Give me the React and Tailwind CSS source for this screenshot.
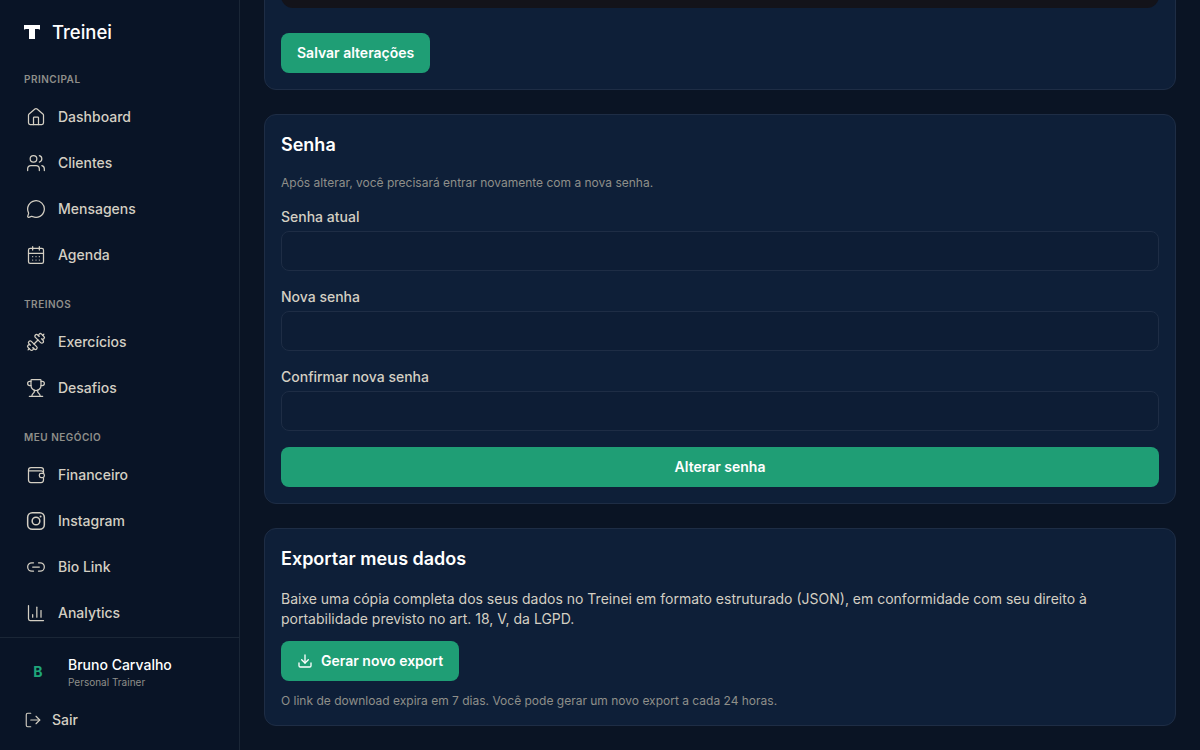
import {
  House,
  Users,
  MessageCircle,
  CalendarDays,
  Dumbbell,
  Trophy,
  Link2,
  ChartColumn,
  LogOut,
  Download,
} from 'lucide-react';

// lucide has no wallet with this square body and clasp
const WalletIcon = ({ size, strokeWidth }) => (
  <svg width={size} height={size} viewBox="0 0 24 24" fill="none" stroke="currentColor" strokeWidth={strokeWidth} strokeLinecap="round" strokeLinejoin="round">
    <path d="M21 9V6a3 3 0 0 0-3-3H6a3 3 0 0 0-3 3v12a3 3 0 0 0 3 3h12a3 3 0 0 0 3-3v-2" />
    <path d="M3 7h15a3 3 0 0 1 3 2" />
    <rect x="16" y="10" width="6" height="5" rx="2" />
  </svg>
);

const InstagramIcon = ({ size }) => (
  <svg width={size} height={size} viewBox="0 0 24 24" fill="none" stroke="currentColor" strokeWidth="1.8">
    <rect x="2" y="2" width="20" height="20" rx="5.5" />
    <circle cx="12" cy="12" r="4.600" />
    <circle cx="17.500" cy="6.500" r="1.200" fill="currentColor" stroke="none" />
  </svg>
);

const groups = [
  {
    title: 'PRINCIPAL',
    items: [
      { icon: House, label: 'Dashboard' },
      { icon: Users, label: 'Clientes' },
      { icon: MessageCircle, label: 'Mensagens' },
      { icon: CalendarDays, label: 'Agenda' },
    ],
  },
  {
    title: 'TREINOS',
    items: [
      { icon: Dumbbell, label: 'Exercícios' },
      { icon: Trophy, label: 'Desafios' },
    ],
  },
  {
    title: 'MEU NEGÓCIO',
    items: [
      { icon: WalletIcon, label: 'Financeiro' },
      { icon: InstagramIcon, label: 'Instagram' },
      { icon: Link2, label: 'Bio Link' },
      { icon: ChartColumn, label: 'Analytics' },
    ],
  },
];

const Field = ({ label }) => (
  <div className="flex flex-col">
    <label className="mb-1 text-sm font-medium leading-5 text-[#d4cfc3]">{label}</label>
    <input
      type="password"
      className="h-10 w-full rounded-lg border border-[#1e2d45] bg-[#0d1d35] outline-none"
    />
  </div>
);

const App = () => {
  return (
    <div className="flex h-screen overflow-hidden bg-[#0a1424] font-['Inter',sans-serif]">
      <aside className="flex h-full w-[240px] shrink-0 flex-col border-r border-[#1a2636] bg-[#091426]">
        <div className="flex h-[64px] items-center gap-3 px-6">
          <svg width="16" height="14" viewBox="0 0 16 14" fill="#fff">
            <path d="M0 0h16v4.500h-.8c-.2-.4-.5-.6-1-.6H11V14H5V3.900H1.800c-.5 0-.8.2-1 .6H0z" />
          </svg>
          <span className="pt-px text-[18.5px] font-medium text-white">Treinei</span>
        </div>
        <nav className="flex min-h-0 flex-1 flex-col">
          {groups.map((group) => (
            <div key={group.title} className="mb-[11px] last:mb-0">
              <div className="px-6 py-[7px] text-[10px] font-semibold leading-[16px] tracking-[0.05em] text-[#8f8f8a]">
                {group.title}
              </div>
              {group.items.map(({ icon: Icon, label }) => (
                <a key={label} className="flex h-[46px] items-center gap-3 pl-[26px] text-sm font-medium text-[#d4cfc3]">
                  <Icon size={20} strokeWidth={1.5} />
                  <span>{label}</span>
                </a>
              ))}
            </div>
          ))}
        </nav>
        <div className="border-t border-[#1a2636] px-6 pb-5 pt-[17px]">
          <div className="flex items-center gap-4">
            <div className="flex w-[28px] justify-center text-sm font-bold text-[#1fa67a]">B</div>
            <div className="flex flex-col">
              <span className="text-sm font-medium leading-5 text-white">Bruno Carvalho</span>
              <span className="text-[10px] leading-[14px] text-[#8f8f8a]">Personal Trainer</span>
            </div>
          </div>
          <button className="mt-[21px] flex h-5 items-center gap-[10px] text-sm font-medium text-[#d4cfc3]">
            <LogOut size={18} strokeWidth={1.5} />
            Sair
          </button>
        </div>
      </aside>
      <main className="flex h-full flex-1 flex-col justify-end gap-6 overflow-hidden bg-[#0a1424] p-6">
        <section className="shrink-0 rounded-xl border border-[#1e2d45] bg-[#0e1f38] p-4">
          <div className="mb-[25px] h-[140px] rounded-xl bg-[#13131a]" />
          <button className="h-10 rounded-lg bg-[#1f9e75] px-4 text-sm font-semibold text-white">
            Salvar alterações
          </button>
        </section>
        <section className="shrink-0 rounded-xl border border-[#1e2d45] bg-[#0e1f38] p-4">
          <h2 className="text-lg font-semibold leading-7 text-white">Senha</h2>
          <p className="mt-4 text-xs leading-4 text-[#8f8f8a]">
            Após alterar, você precisará entrar novamente com a nova senha.
          </p>
          <div className="mt-4 flex flex-col gap-4">
            <Field label="Senha atual" />
            <Field label="Nova senha" />
            <Field label="Confirmar nova senha" />
            <button className="h-10 w-full rounded-lg bg-[#1f9e75] text-sm font-semibold text-white">
              Alterar senha
            </button>
          </div>
        </section>
        <section className="shrink-0 rounded-xl border border-[#1e2d45] bg-[#0e1f38] p-4">
          <h2 className="text-lg font-semibold leading-7 text-white">Exportar meus dados</h2>
          <p className="mt-4 text-sm leading-5 text-[#d4cfc3]">
            Baixe uma cópia completa dos seus dados no Treinei em formato estruturado (JSON), em conformidade com seu direito à portabilidade previsto no art. 18, V, da LGPD.
          </p>
          <button className="mt-3 flex h-10 items-center gap-2 rounded-lg bg-[#1f9e75] px-4 text-sm font-semibold text-white">
            <Download size={16} strokeWidth={2} />
            Gerar novo export
          </button>
          <p className="mt-3 text-xs leading-4 text-[#8f8f8a]">
            O link de download expira em 7 dias. Você pode gerar um novo export a cada 24 horas.
          </p>
        </section>
      </main>
    </div>
  );
};

export default App;
